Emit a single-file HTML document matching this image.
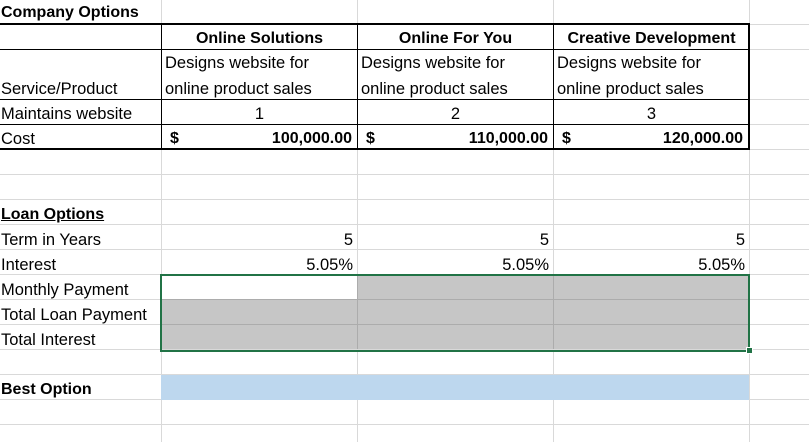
<!DOCTYPE html>
<html><head><style>
body{margin:0;width:809px;height:442px;overflow:hidden;background:#fff;font-family:"Liberation Sans",Arial,sans-serif;font-size:16.5px;color:#000;position:relative}
.a{position:absolute}
.h{position:absolute;left:0;width:809px;height:1px;background:#d9d9d9}
.v{position:absolute;top:0;width:1px;height:442px;background:#d9d9d9}
.t{position:absolute;white-space:nowrap;line-height:18px}
.b{font-weight:bold;font-size:16px}
.k{position:absolute;background:#000}
</style></head><body>
<div class="v" style="left:161px"></div><div class="v" style="left:357px"></div><div class="v" style="left:553px"></div><div class="v" style="left:749px"></div>
<div class="h" style="top:174px"></div><div class="h" style="top:199px"></div><div class="h" style="top:224px"></div><div class="h" style="top:249px"></div><div class="h" style="top:274px"></div><div class="h" style="top:299px"></div><div class="h" style="top:324px"></div><div class="h" style="top:349px"></div><div class="h" style="top:374px"></div><div class="h" style="top:399px"></div><div class="h" style="top:424px"></div>
<div class="h" style="top:24px;left:749px;width:60px"></div><div class="h" style="top:49px;left:749px;width:60px"></div><div class="h" style="top:99px;left:749px;width:60px"></div><div class="h" style="top:124px;left:749px;width:60px"></div><div class="h" style="top:149px;left:749px;width:60px"></div>
<div class="a" style="left:358px;top:276px;width:390px;height:73px;background:#c6c6c6"></div>
<div class="a" style="left:162px;top:300px;width:196px;height:49px;background:#c6c6c6"></div>
<div class="a" style="left:357px;top:276px;width:1px;height:73px;background:#acacac"></div>
<div class="a" style="left:553px;top:276px;width:1px;height:73px;background:#acacac"></div>
<div class="a" style="left:162px;top:299px;width:586px;height:1px;background:#acacac"></div>
<div class="a" style="left:162px;top:324px;width:586px;height:1px;background:#acacac"></div>
<div class="a" style="left:161px;top:375px;width:588px;height:25px;background:#bdd7ee"></div>
<div class="a" style="left:160px;top:274px;width:586px;height:74px;border:2px solid #217346"></div>
<div class="a" style="left:746px;top:347px;width:5px;height:5px;background:#217346;border:1px solid #fff"></div>
<div class="k" style="left:0;top:23px;width:750px;height:2px"></div>
<div class="k" style="left:0;top:49px;width:750px;height:1px"></div>
<div class="k" style="left:0;top:99px;width:750px;height:1px"></div>
<div class="k" style="left:0;top:124px;width:750px;height:1px"></div>
<div class="k" style="left:0;top:148px;width:750px;height:2px"></div>
<div class="k" style="left:161px;top:23px;width:1px;height:127px"></div>
<div class="k" style="left:357px;top:23px;width:1px;height:127px"></div>
<div class="k" style="left:553px;top:23px;width:1px;height:127px"></div>
<div class="k" style="left:748px;top:23px;width:2px;height:127px"></div>
<div class="t b" style="left:1px;top:4px">Company Options</div>
<div class="t b" style="left:162px;width:195px;text-align:center;top:30px">Online Solutions</div>
<div class="t b" style="left:358px;width:195px;text-align:center;top:30px">Online For You</div>
<div class="t b" style="left:554px;width:195px;text-align:center;top:30px">Creative Development</div>
<div class="t" style="left:165px;top:54px">Designs website for</div>
<div class="t" style="left:165px;top:80px">online product sales</div>
<div class="t" style="left:361px;top:54px">Designs website for</div>
<div class="t" style="left:361px;top:80px">online product sales</div>
<div class="t" style="left:557px;top:54px">Designs website for</div>
<div class="t" style="left:557px;top:80px">online product sales</div>
<div class="t" style="left:1px;top:80px">Service/Product</div>
<div class="t" style="left:1px;top:105px">Maintains website</div>
<div class="t" style="left:162px;width:195px;text-align:center;top:105px">1</div>
<div class="t" style="left:358px;width:195px;text-align:center;top:105px">2</div>
<div class="t" style="left:554px;width:195px;text-align:center;top:105px">3</div>
<div class="t" style="left:1px;top:130px">Cost</div>
<div class="t b" style="left:170px;top:130px">$</div><div class="t b" style="left:162px;width:190px;text-align:right;top:130px">100,000.00</div>
<div class="t b" style="left:366px;top:130px">$</div><div class="t b" style="left:358px;width:190px;text-align:right;top:130px">110,000.00</div>
<div class="t b" style="left:562px;top:130px">$</div><div class="t b" style="left:554px;width:189px;text-align:right;top:130px">120,000.00</div>
<div class="t b" style="left:1px;top:206px;text-decoration:underline">Loan Options</div>
<div class="t" style="left:1px;top:231px">Term in Years</div>
<div class="t" style="left:162px;width:191px;text-align:right;top:231px">5</div>
<div class="t" style="left:358px;width:191px;text-align:right;top:231px">5</div>
<div class="t" style="left:554px;width:191px;text-align:right;top:231px">5</div>
<div class="t" style="left:1px;top:256px">Interest</div>
<div class="t" style="left:162px;width:191px;text-align:right;top:256px">5.05%</div>
<div class="t" style="left:358px;width:191px;text-align:right;top:256px">5.05%</div>
<div class="t" style="left:554px;width:191px;text-align:right;top:256px">5.05%</div>
<div class="t" style="left:1px;top:281px">Monthly Payment</div>
<div class="t" style="left:1px;top:306px">Total Loan Payment</div>
<div class="t" style="left:1px;top:331px">Total Interest</div>
<div class="t b" style="left:1px;top:381px">Best Option</div>
</body></html>
